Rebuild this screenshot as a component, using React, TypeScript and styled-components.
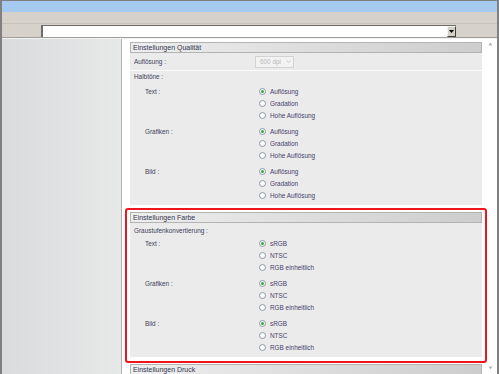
import React from 'react';
import styled, { createGlobalStyle } from 'styled-components';

const Global = createGlobalStyle`
  html, body { margin: 0; padding: 0; width: 499px; height: 374px; overflow: hidden; background: #fff; }
  body { font-family: "Liberation Sans", Arial, sans-serif; }
  #root { width: 499px; height: 374px; }
`;

const Frame = styled.div`
  width: 499px;
  height: 374px;
  box-sizing: border-box;
  border-style: solid;
  border-color: #808080;
  border-width: 1px 2px 0 2px;
  display: flex;
  flex-direction: column;
  overflow: hidden;
`;

const TitleBar = styled.div`
  height: 11px;
  background: #a6c9ef;
  flex: none;
`;

const ToolBar = styled.div`
  height: 11px;
  background: #d6d2cb;
  border-bottom: 1px solid #c6c2ba;
  flex: none;
`;

const SelectRow = styled.div`
  height: 14px;
  background: #d6d2cb;
  padding: 1px 0 0 39px;
  box-sizing: border-box;
  border-bottom: 1px solid #a09d97;
  flex: none;
  display: flex;
  align-items: flex-start;
`;

const Field = styled.div`
  width: 415px;
  height: 12px;
  box-sizing: border-box;
  background: #fff;
  border-style: solid;
  border-width: 1px 0 0 2px;
  border-color: #6e6c68;
  display: flex;
  justify-content: flex-end;
`;

const DropButton = styled.div`
  width: 9px;
  height: 11px;
  box-sizing: border-box;
  background: #d4d0c8;
  border: 1px solid;
  border-color: #f4f4f4 #404040 #404040 #f4f4f4;
  display: flex;
  align-items: center;
  justify-content: center;
`;

const Separator = styled.div`
  height: 1px;
  background: #f2f2f2;
  flex: none;
`;

const Main = styled.div`
  flex: 1;
  display: flex;
  min-height: 0;
`;

const LeftPanel = styled.div`
  width: 119px;
  flex: none;
  background: linear-gradient(to right, #d9dcdc, #e7e9e9);
  border-right: 1px solid #b4b4b4;
`;

const Content = styled.div`
  flex: 1;
  background: #fff;
  display: flex;
  min-width: 0;
`;

const Sections = styled.div`
  width: 352px;
  margin-left: 8px;
  padding-top: 3px;
  display: flex;
  flex-direction: column;
  flex: none;
`;

const Scrollbar = styled.div`
  flex: 1;
  display: flex;
  flex-direction: column;
  justify-content: space-between;
  align-items: flex-end;
  padding: 3px 4px 4px 0;
`;

const Section = styled.div<{ $mt?: number }>`
  display: flex;
  flex-direction: column;
  margin-top: ${(p) => p.$mt ?? 0}px;
`;

const SectionHeader = styled.div`
  height: 11px;
  box-sizing: border-box;
  border: 1px solid #b3b3b3;
  background: linear-gradient(to right, #eeeeee, #cdcdcd);
  font-size: 7px;
  line-height: 9px;
  padding-left: 2px;
  color: #35354f;
  white-space: nowrap;
  overflow: hidden;
`;

const SectionBody = styled.div<{ $pt?: number; $pb?: number }>`
  background: #ebebeb;
  padding: ${(p) => p.$pt ?? 0}px 0 ${(p) => p.$pb ?? 0}px 0;
`;

const Highlight = styled.div`
  margin: 3px -5px 0;
  border: 2px solid #f0141c;
  border-radius: 3px;
  padding: 2px 3px 4px;
`;

const SettingRow = styled.div`
  height: 17px;
  border-bottom: 1px solid #fbfbfb;
  display: flex;
  align-items: center;
  padding-left: 4px;
  font-size: 6.4px;
  color: #40405a;
`;

const RowLabel = styled.span`
  width: 121px;
  flex: none;
`;

const DisabledSelect = styled.div`
  width: 39px;
  height: 12px;
  box-sizing: border-box;
  border: 1px solid #d2d2d2;
  background: #f3f3f3;
  color: #b9b9b9;
  font-size: 6.4px;
  display: flex;
  align-items: center;
  justify-content: space-between;
  padding: 0 2px 0 4px;
`;

const SubHeading = styled.div<{ $lh: number; $after: number }>`
  padding-left: 4px;
  font-size: 6.4px;
  line-height: ${(p) => p.$lh}px;
  padding-bottom: ${(p) => p.$after}px;
  color: #40405a;
`;

const Group = styled.div`
  display: grid;
  grid-template-columns: 114px 1fr;
  padding-left: 15px;
  & + & {
    margin-top: 4px;
  }
`;

const GroupLabel = styled.div`
  font-size: 6.4px;
  height: 12px;
  display: flex;
  align-items: center;
  color: #40405a;
`;

const Options = styled.div`
  display: flex;
  flex-direction: column;
`;

const Option = styled.div`
  height: 12px;
  display: flex;
  align-items: center;
  gap: 4px;
  font-size: 6.4px;
  color: #463d6c;
`;

const RadioCircle = styled.span<{ $checked?: boolean }>`
  width: 7px;
  height: 7px;
  box-sizing: border-box;
  border-radius: 50%;
  border: 1px solid #8d98a6;
  background: #fdfdfd;
  display: flex;
  align-items: center;
  justify-content: center;
  flex: none;
  &::after {
    content: '';
    width: 3px;
    height: 3px;
    border-radius: 50%;
    background: ${(p) => (p.$checked ? '#35a83c' : 'transparent')};
  }
`;

const Arrow = ({ up }: { up?: boolean }) => (
  <svg width="5" height="4" viewBox="0 0 5 4">
    <path d={up ? 'M2.5 0.5 L4.5 3.5 L0.5 3.5 Z' : 'M0.5 0.5 L4.5 0.5 L2.5 3.5 Z'} fill="#b4b4b4" />
  </svg>
);

type GroupDef = { label: string; options: string[] };

const RadioGroup = ({ label, options }: GroupDef) => (
  <Group>
    <GroupLabel>{label}</GroupLabel>
    <Options>
      {options.map((o, i) => (
        <Option key={o}>
          <RadioCircle $checked={i === 0} />
          {o}
        </Option>
      ))}
    </Options>
  </Group>
);

const quality = ['Auflösung', 'Gradation', 'Hohe Auflösung'];
const color = ['sRGB', 'NTSC', 'RGB einheitlich'];

export default function App() {
  return (
    <>
      <Global />
      <Frame>
        <TitleBar />
        <ToolBar />
        <SelectRow>
          <Field>
            <DropButton>
              <svg width="5" height="3" viewBox="0 0 5 3">
                <path d="M0 0 L5 0 L2.5 3 Z" fill="#000" />
              </svg>
            </DropButton>
          </Field>
        </SelectRow>
        <Separator />
        <Main>
          <LeftPanel />
          <Content>
            <Sections>
              <Section>
                <SectionHeader>Einstellungen Qualität</SectionHeader>
                <SectionBody $pb={4}>
                  <SettingRow>
                    <RowLabel>Auflösung :</RowLabel>
                    <DisabledSelect>
                      600 dpi
                      <svg width="5" height="3" viewBox="0 0 5 3">
                        <path d="M0.5 0.5 L2.5 2.5 L4.5 0.5" stroke="#c4c4c4" fill="none" />
                      </svg>
                    </DisabledSelect>
                  </SettingRow>
                  <SubHeading $lh={11} $after={3}>Halbtöne :</SubHeading>
                  <RadioGroup label="Text :" options={quality} />
                  <RadioGroup label="Grafiken :" options={quality} />
                  <RadioGroup label="Bild :" options={quality} />
                </SectionBody>
              </Section>
              <Highlight>
                <Section>
                  <SectionHeader>Einstellungen Farbe</SectionHeader>
                  <SectionBody $pt={2} $pb={4}>
                    <SubHeading $lh={12} $after={0}>Graustufenkonvertierung :</SubHeading>
                    <RadioGroup label="Text :" options={color} />
                    <RadioGroup label="Grafiken :" options={color} />
                    <RadioGroup label="Bild :" options={color} />
                  </SectionBody>
                </Section>
              </Highlight>
              <Section $mt={1}>
                <SectionHeader>Einstellungen Druck</SectionHeader>
              </Section>
            </Sections>
            <Scrollbar>
              <Arrow up />
              <Arrow />
            </Scrollbar>
          </Content>
        </Main>
      </Frame>
    </>
  );
}
